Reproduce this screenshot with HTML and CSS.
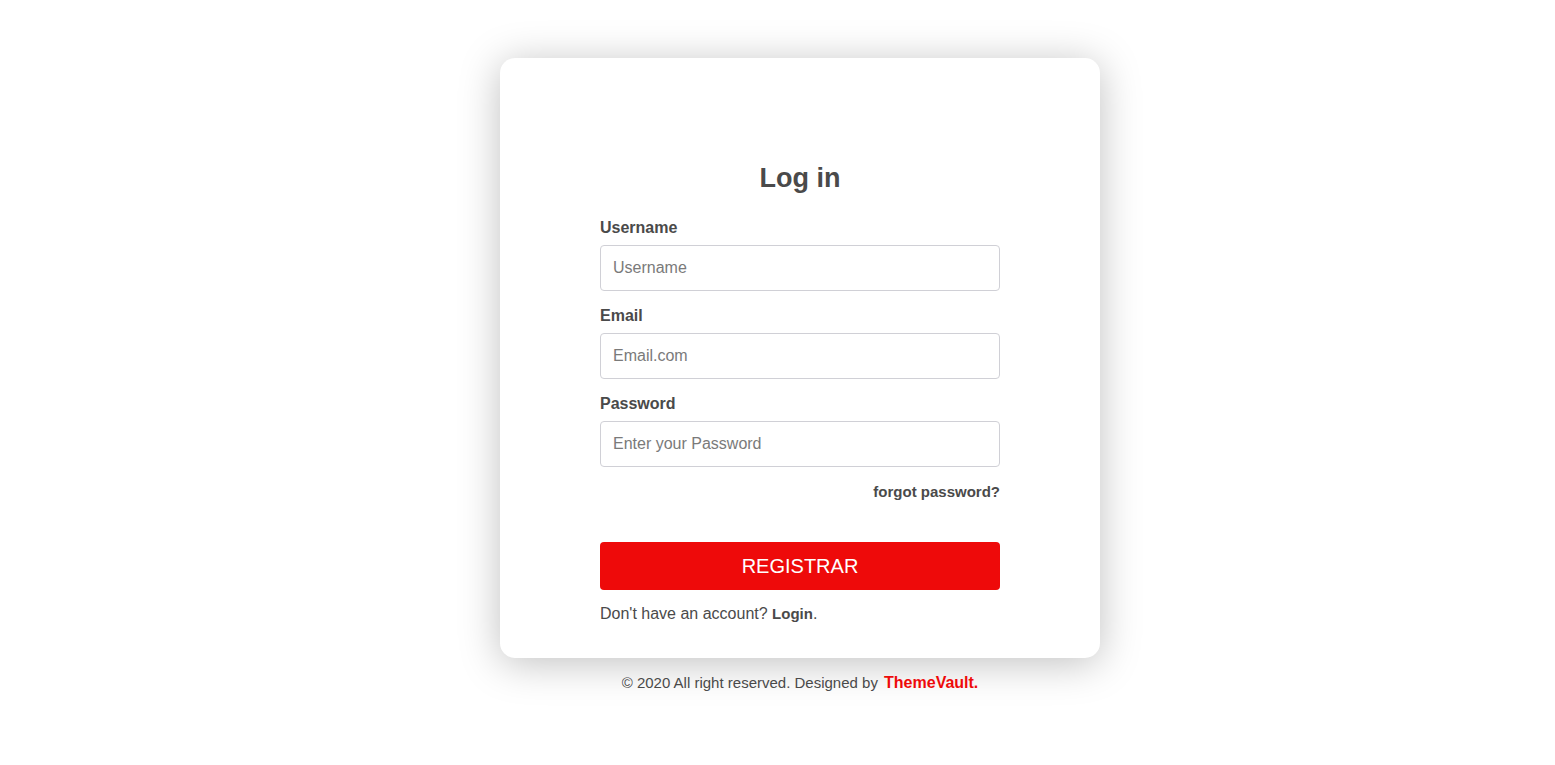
FILE: index.html
```html
<!DOCTYPE html>
<html>
<head>
<meta charset="utf-8">
<title>Log in</title>
<link rel="stylesheet" href="styles.css">
</head>
<body>
<main class="page">
  <section class="card">
    <form class="form">
      <h1 class="title">Log in</h1>
      <div class="field">
        <label class="label" for="u">Username</label>
        <input class="input" id="u" type="text" placeholder="Username">
      </div>
      <div class="field">
        <label class="label" for="e">Email</label>
        <input class="input" id="e" type="email" placeholder="Email.com">
      </div>
      <div class="field field-last">
        <label class="label" for="p">Password</label>
        <input class="input" id="p" type="password" placeholder="Enter your Password">
      </div>
      <div class="forgot-row"><a class="forgot" href="#">forgot password?</a></div>
      <button class="btn" type="button">REGISTRAR</button>
      <p class="signup">Don't have an account? <a class="signup-link" href="#">Login</a>.</p>
    </form>
  </section>
  <footer class="footer">© 2020 All right reserved. Designed by <a class="brand" href="#">ThemeVault.</a></footer>
</main>
</body>
</html>
```
FILE: styles.css
```css
* { box-sizing: border-box; }
html, body { margin: 0; padding: 0; background: #fff; }
body { font-family: "Liberation Sans", Arial, sans-serif; color: #4a4a4a; }
.page { display: flex; flex-direction: column; align-items: center; padding: 58px 0 0 45px; min-height: 100vh; }
.card {
  width: 600px;
  background: #fff;
  border-radius: 15px;
  padding: 105px 100px 35px;
  box-shadow: 0 5px 40px rgba(0,0,0,0.25);
}
.form { display: flex; flex-direction: column; margin: 0; }
.title { margin: 0 0 25px; text-align: center; font-size: 27px; line-height: 30px; font-weight: bold; color: #4a4a4a; }
.field { display: flex; flex-direction: column; margin-bottom: 15px; }
.field-last { margin-bottom: 0; }
.label { font-size: 16px; line-height: 19px; font-weight: bold; color: #4a4a4a; margin-bottom: 8px; }
.input {
  height: 46px;
  border: 1px solid #d0d0d6;
  border-radius: 4px;
  padding: 0 12px;
  font-family: inherit;
  font-size: 16px;
  color: #333;
  outline: none;
}
.input::placeholder { color: #7a7a7a; }
.forgot-row { display: flex; justify-content: flex-end; margin-top: 17px; }
.forgot { font-size: 15px; line-height: 16px; font-weight: bold; color: #4a4a4a; text-decoration: none; }
.btn {
  margin-top: 42px;
  height: 48px;
  border: none;
  border-radius: 4px;
  background: #ee0a0a;
  color: #fff;
  font-family: inherit;
  font-size: 20px;
  cursor: pointer;
}
.signup { margin: 15px 0 0; font-size: 16px; line-height: 18px; color: #4a4a4a; }
.signup-link { font-weight: bold; font-size: 15px; color: #4a4a4a; text-decoration: none; }
.footer { margin-top: 16px; font-size: 15px; line-height: 17px; color: #4a4a4a; }
.brand { font-size: 16px; font-weight: bold; color: #ee0a0a; text-decoration: none; margin-left: 2px; }
```
